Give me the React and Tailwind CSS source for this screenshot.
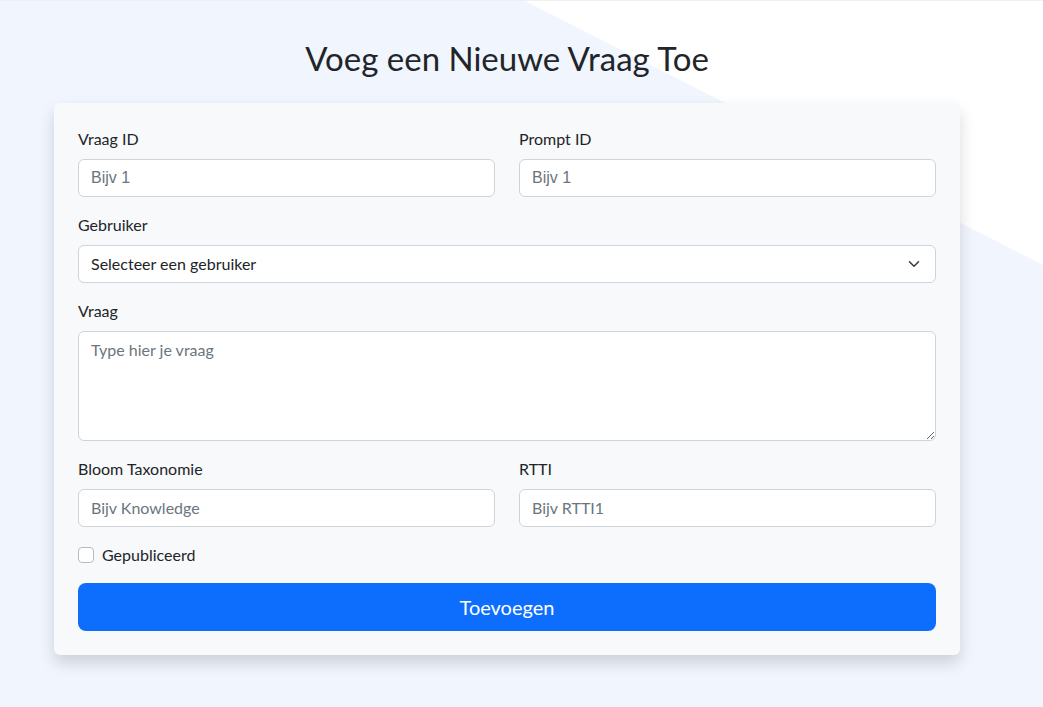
import { useState } from "react";

const font = { fontFamily: "Lato, 'Noto Sans', sans-serif" };

function Field({ label, children }) {
  return (
    <div className="flex flex-col">
      <label className="text-[16px] leading-6 text-[#212529] mb-2">{label}</label>
      {children}
    </div>
  );
}

const inputCls =
  "w-full h-[38px] bg-white border border-[#ced4da] rounded-[6px] px-3 text-[16px] text-[#212529] placeholder:text-[#6c757d] focus:outline-none";

export default function App() {
  const [published, setPublished] = useState(false);

  return (
    <div className="relative h-[707px] overflow-hidden bg-[#f0f5fe]" style={font}>
      {/* white diagonal in the background */}
      <div className="absolute inset-0 bg-white [clip-path:polygon(523px_0,100%_0,100%_265px)]" />
      <div className="absolute top-0 left-0 right-0 h-px bg-[#eef0f2]" />

      <div className="relative flex flex-col items-center pt-[39px] pr-[29px]">
        <h2 className="text-[33px] leading-[1.2] text-[#212529] mb-6">
          Voeg een Nieuwe Vraag Toe
        </h2>

        <form className="w-[906px] bg-[#f8f9fa] rounded-[6px] shadow-[0_8px_16px_rgba(0,0,0,0.15)] p-6 flex flex-col gap-4">
          <div className="grid grid-cols-2 gap-6">
            <Field label="Vraag ID">
              <input
                type="number"
                placeholder="Bijv 1"
                className={inputCls}
                style={{ fontFamily: "'Liberation Sans', Arial, sans-serif" }}
              />
            </Field>
            <Field label="Prompt ID">
              <input
                type="number"
                placeholder="Bijv 1"
                className={inputCls}
                style={{ fontFamily: "'Liberation Sans', Arial, sans-serif" }}
              />
            </Field>
          </div>

          <Field label="Gebruiker">
            <div className="relative">
              <select className={inputCls + " appearance-none pr-10"} defaultValue="">
                <option value="">Selecteer een gebruiker</option>
              </select>
              <svg
                className="absolute right-[16px] top-[13px] pointer-events-none"
                width="12"
                height="12"
                viewBox="0 0 16 16"
                fill="none"
                stroke="#343a40"
                strokeWidth="2"
                strokeLinecap="round"
                strokeLinejoin="round"
              >
                <path d="m2 5 6 6 6-6" />
              </svg>
            </div>
          </Field>

          <Field label="Vraag">
            <textarea
              placeholder="Type hier je vraag"
              className="w-full h-[110px] bg-white border border-[#ced4da] rounded-[6px] px-3 py-[6px] text-[16px] leading-6 placeholder:text-[#6c757d] focus:outline-none"
            />
          </Field>

          <div className="grid grid-cols-2 gap-6">
            <Field label="Bloom Taxonomie">
              <input type="text" placeholder="Bijv Knowledge" className={inputCls} />
            </Field>
            <Field label="RTTI">
              <input type="text" placeholder="Bijv RTTI1" className={inputCls} />
            </Field>
          </div>

          <label className="flex items-center gap-2 h-6 text-[16px] text-[#212529]">
            <input
              type="checkbox"
              checked={published}
              onChange={(e) => setPublished(e.target.checked)}
              className="appearance-none w-4 h-4 bg-white border border-[#b5bbc1] rounded-[4px] checked:bg-[#0d6efd] checked:border-[#0d6efd]"
            />
            Gepubliceerd
          </label>

          <button
            type="button"
            className="w-full h-12 bg-[#0d6efd] text-white text-[20px] rounded-[8px] hover:bg-[#0b5ed7]"
          >
            Toevoegen
          </button>
        </form>
      </div>
    </div>
  );
}
